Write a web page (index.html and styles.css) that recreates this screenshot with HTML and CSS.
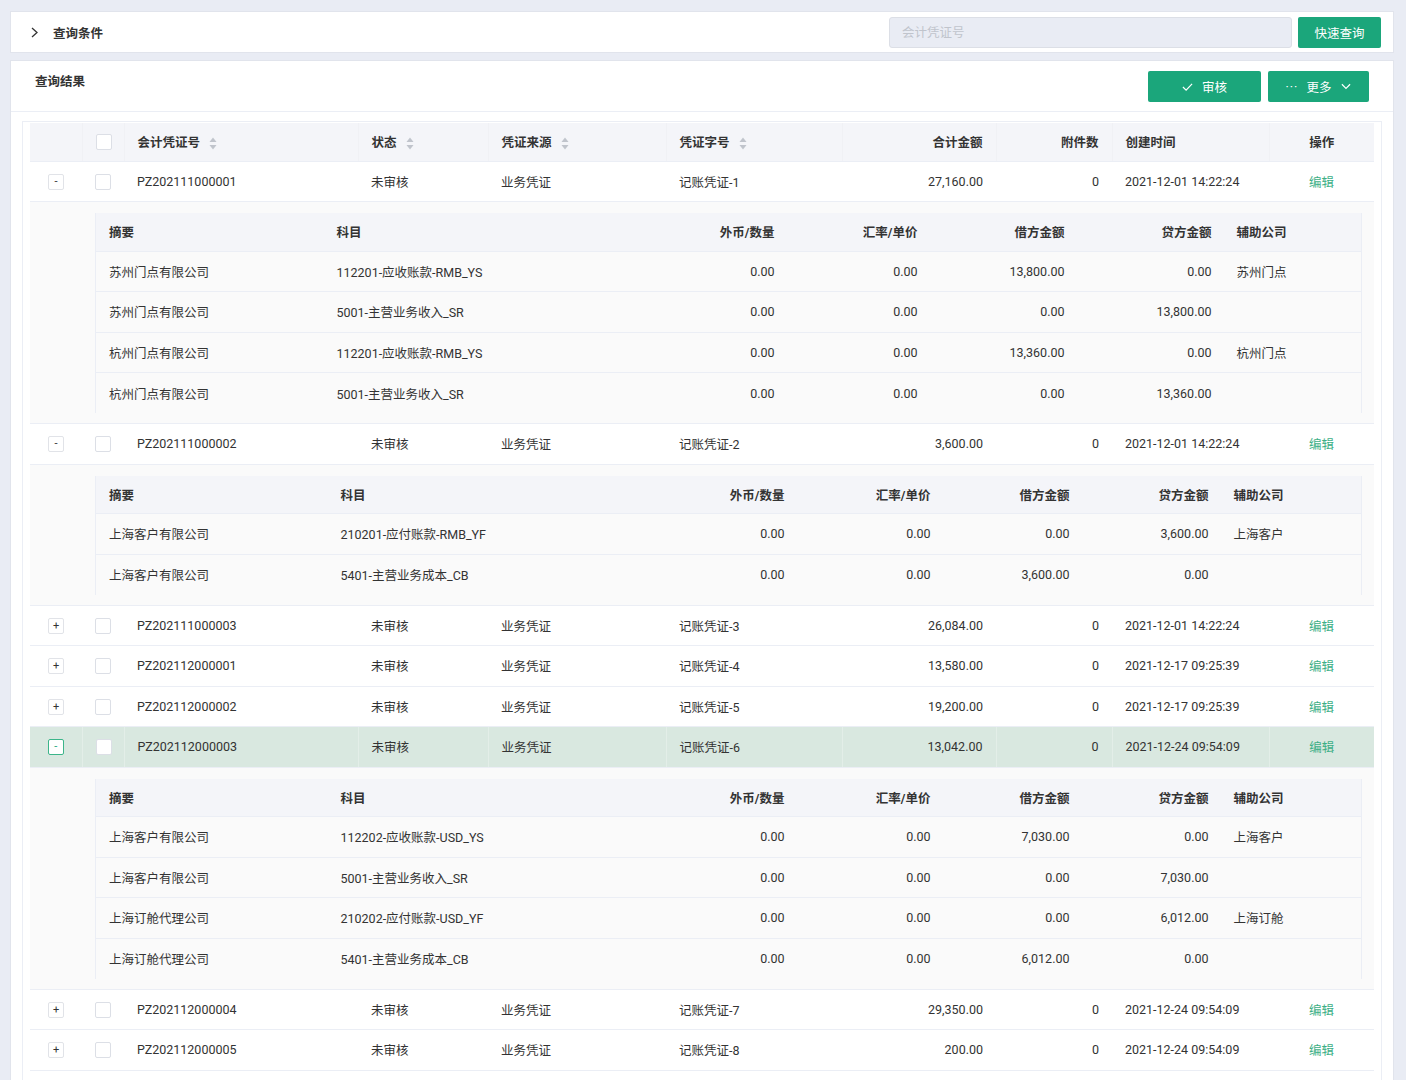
FILE: index.html
```html
<!DOCTYPE html>
<html lang="zh-CN">
<head>
    <meta charset="UTF-8">
    <title>凭证查询</title>
    <link rel="stylesheet" href="styles.css">
</head>
<body>
    <section class="query-bar">
        <div class="query-bar__toggle">
            <svg class="query-bar__arrow" viewBox="0 0 7 11"><path d="M1 1l5 4.5L1 10" /></svg>
            <span class="query-bar__title">查询条件</span>
        </div>
        <input class="query-bar__input" type="text" placeholder="会计凭证号">
        <button class="btn btn--search">快速查询</button>
    </section>

    <section class="result">
        <div class="result__header">
            <h2 class="result__title">查询结果</h2>
            <div class="result__actions">
                <button class="btn btn--action btn--audit">
                    <svg class="btn__icon" viewBox="0 0 12 10"><path d="M1 5l3.5 3.5L11 1.5" /></svg>
                    审核
                </button>
                <button class="btn btn--action btn--more">
                    <span class="btn__dots">···</span>
                    更多
                    <svg class="btn__icon btn__icon--down" viewBox="0 0 11 7"><path d="M1 1l4.5 4.5L10 1" /></svg>
                </button>
            </div>
        </div>

        <div class="grid-wrap">
            <table class="grid">
                <colgroup>
                    <col class="grid__col-expand">
                    <col class="grid__col-check">
                    <col class="grid__col-no">
                    <col class="grid__col-status">
                    <col class="grid__col-source">
                    <col class="grid__col-word">
                    <col class="grid__col-amount">
                    <col class="grid__col-attach">
                    <col class="grid__col-time">
                    <col class="grid__col-op">
                </colgroup>
                <thead>
                    <tr class="grid__head">
                        <th></th>
                        <th><span class="checkbox"></span></th>
                        <th>会计凭证号<svg class="sort" viewBox="0 0 8 13"><path d="M4 0.5L7.5 5H0.5z" /><path d="M4 12.5L0.5 8h7z" /></svg></th>
                        <th>状态<svg class="sort" viewBox="0 0 8 13"><path d="M4 0.5L7.5 5H0.5z" /><path d="M4 12.5L0.5 8h7z" /></svg></th>
                        <th>凭证来源<svg class="sort" viewBox="0 0 8 13"><path d="M4 0.5L7.5 5H0.5z" /><path d="M4 12.5L0.5 8h7z" /></svg></th>
                        <th>凭证字号<svg class="sort" viewBox="0 0 8 13"><path d="M4 0.5L7.5 5H0.5z" /><path d="M4 12.5L0.5 8h7z" /></svg></th>
                        <th class="is-right">合计金额</th>
                        <th class="is-right">附件数</th>
                        <th>创建时间</th>
                        <th class="is-center">操作</th>
                    </tr>
                </thead>
                <tbody>
                    <tr class="grid__row">
                        <td class="is-center"><span class="expander">-</span></td>
                        <td><span class="checkbox"></span></td>
                        <td>PZ202111000001</td>
                        <td>未审核</td>
                        <td>业务凭证</td>
                        <td>记账凭证-1</td>
                        <td class="is-right">27,160.00</td>
                        <td class="is-right">0</td>
                        <td>2021-12-01 14:22:24</td>
                        <td class="is-center"><a class="link" href="#">编辑</a></td>
                    </tr>
                    <tr class="grid__detail">
                        <td colspan="10">
                            <table class="detail">
                                <colgroup>
                                    <col class="detail__c1"><col class="detail__c2"><col class="detail__c3"><col class="detail__c4"><col class="detail__c5"><col class="detail__c6"><col class="detail__c7">
                                </colgroup>
                                <tr class="detail__head">
                                    <th>摘要</th><th>科目</th><th class="is-right">外币/数量</th><th class="is-right">汇率/单价</th><th class="is-right">借方金额</th><th class="is-right">贷方金额</th><th>辅助公司</th>
                                </tr>
                                <tr><td>苏州门点有限公司</td><td>112201-应收账款-RMB_YS</td><td class="is-right">0.00</td><td class="is-right">0.00</td><td class="is-right">13,800.00</td><td class="is-right">0.00</td><td>苏州门点</td></tr>
                                <tr><td>苏州门点有限公司</td><td>5001-主营业务收入_SR</td><td class="is-right">0.00</td><td class="is-right">0.00</td><td class="is-right">0.00</td><td class="is-right">13,800.00</td><td></td></tr>
                                <tr><td>杭州门点有限公司</td><td>112201-应收账款-RMB_YS</td><td class="is-right">0.00</td><td class="is-right">0.00</td><td class="is-right">13,360.00</td><td class="is-right">0.00</td><td>杭州门点</td></tr>
                                <tr><td>杭州门点有限公司</td><td>5001-主营业务收入_SR</td><td class="is-right">0.00</td><td class="is-right">0.00</td><td class="is-right">0.00</td><td class="is-right">13,360.00</td><td></td></tr>
                            </table>
                        </td>
                    </tr>
                    <tr class="grid__row">
                        <td class="is-center"><span class="expander">-</span></td>
                        <td><span class="checkbox"></span></td>
                        <td>PZ202111000002</td>
                        <td>未审核</td>
                        <td>业务凭证</td>
                        <td>记账凭证-2</td>
                        <td class="is-right">3,600.00</td>
                        <td class="is-right">0</td>
                        <td>2021-12-01 14:22:24</td>
                        <td class="is-center"><a class="link" href="#">编辑</a></td>
                    </tr>
                    <tr class="grid__detail">
                        <td colspan="10">
                            <table class="detail detail--alt">
                                <colgroup>
                                    <col class="detail__c1"><col class="detail__c2"><col class="detail__c3"><col class="detail__c4"><col class="detail__c5"><col class="detail__c6"><col class="detail__c7">
                                </colgroup>
                                <tr class="detail__head">
                                    <th>摘要</th><th>科目</th><th class="is-right">外币/数量</th><th class="is-right">汇率/单价</th><th class="is-right">借方金额</th><th class="is-right">贷方金额</th><th>辅助公司</th>
                                </tr>
                                <tr><td>上海客户有限公司</td><td>210201-应付账款-RMB_YF</td><td class="is-right">0.00</td><td class="is-right">0.00</td><td class="is-right">0.00</td><td class="is-right">3,600.00</td><td>上海客户</td></tr>
                                <tr><td>上海客户有限公司</td><td>5401-主营业务成本_CB</td><td class="is-right">0.00</td><td class="is-right">0.00</td><td class="is-right">3,600.00</td><td class="is-right">0.00</td><td></td></tr>
                            </table>
                        </td>
                    </tr>
                    <tr class="grid__row">
                        <td class="is-center"><span class="expander">+</span></td>
                        <td><span class="checkbox"></span></td>
                        <td>PZ202111000003</td>
                        <td>未审核</td>
                        <td>业务凭证</td>
                        <td>记账凭证-3</td>
                        <td class="is-right">26,084.00</td>
                        <td class="is-right">0</td>
                        <td>2021-12-01 14:22:24</td>
                        <td class="is-center"><a class="link" href="#">编辑</a></td>
                    </tr>
                    <tr class="grid__row">
                        <td class="is-center"><span class="expander">+</span></td>
                        <td><span class="checkbox"></span></td>
                        <td>PZ202112000001</td>
                        <td>未审核</td>
                        <td>业务凭证</td>
                        <td>记账凭证-4</td>
                        <td class="is-right">13,580.00</td>
                        <td class="is-right">0</td>
                        <td>2021-12-17 09:25:39</td>
                        <td class="is-center"><a class="link" href="#">编辑</a></td>
                    </tr>
                    <tr class="grid__row">
                        <td class="is-center"><span class="expander">+</span></td>
                        <td><span class="checkbox"></span></td>
                        <td>PZ202112000002</td>
                        <td>未审核</td>
                        <td>业务凭证</td>
                        <td>记账凭证-5</td>
                        <td class="is-right">19,200.00</td>
                        <td class="is-right">0</td>
                        <td>2021-12-17 09:25:39</td>
                        <td class="is-center"><a class="link" href="#">编辑</a></td>
                    </tr>
                    <tr class="grid__row grid__row--active">
                        <td class="is-center"><span class="expander expander--active">-</span></td>
                        <td><span class="checkbox"></span></td>
                        <td>PZ202112000003</td>
                        <td>未审核</td>
                        <td>业务凭证</td>
                        <td>记账凭证-6</td>
                        <td class="is-right">13,042.00</td>
                        <td class="is-right">0</td>
                        <td>2021-12-24 09:54:09</td>
                        <td class="is-center"><a class="link" href="#">编辑</a></td>
                    </tr>
                    <tr class="grid__detail">
                        <td colspan="10">
                            <table class="detail detail--alt">
                                <colgroup>
                                    <col class="detail__c1"><col class="detail__c2"><col class="detail__c3"><col class="detail__c4"><col class="detail__c5"><col class="detail__c6"><col class="detail__c7">
                                </colgroup>
                                <tr class="detail__head">
                                    <th>摘要</th><th>科目</th><th class="is-right">外币/数量</th><th class="is-right">汇率/单价</th><th class="is-right">借方金额</th><th class="is-right">贷方金额</th><th>辅助公司</th>
                                </tr>
                                <tr><td>上海客户有限公司</td><td>112202-应收账款-USD_YS</td><td class="is-right">0.00</td><td class="is-right">0.00</td><td class="is-right">7,030.00</td><td class="is-right">0.00</td><td>上海客户</td></tr>
                                <tr><td>上海客户有限公司</td><td>5001-主营业务收入_SR</td><td class="is-right">0.00</td><td class="is-right">0.00</td><td class="is-right">0.00</td><td class="is-right">7,030.00</td><td></td></tr>
                                <tr><td>上海订舱代理公司</td><td>210202-应付账款-USD_YF</td><td class="is-right">0.00</td><td class="is-right">0.00</td><td class="is-right">0.00</td><td class="is-right">6,012.00</td><td>上海订舱</td></tr>
                                <tr><td>上海订舱代理公司</td><td>5401-主营业务成本_CB</td><td class="is-right">0.00</td><td class="is-right">0.00</td><td class="is-right">6,012.00</td><td class="is-right">0.00</td><td></td></tr>
                            </table>
                        </td>
                    </tr>
                    <tr class="grid__row">
                        <td class="is-center"><span class="expander">+</span></td>
                        <td><span class="checkbox"></span></td>
                        <td>PZ202112000004</td>
                        <td>未审核</td>
                        <td>业务凭证</td>
                        <td>记账凭证-7</td>
                        <td class="is-right">29,350.00</td>
                        <td class="is-right">0</td>
                        <td>2021-12-24 09:54:09</td>
                        <td class="is-center"><a class="link" href="#">编辑</a></td>
                    </tr>
                    <tr class="grid__row">
                        <td class="is-center"><span class="expander">+</span></td>
                        <td><span class="checkbox"></span></td>
                        <td>PZ202112000005</td>
                        <td>未审核</td>
                        <td>业务凭证</td>
                        <td>记账凭证-8</td>
                        <td class="is-right">200.00</td>
                        <td class="is-right">0</td>
                        <td>2021-12-24 09:54:09</td>
                        <td class="is-center"><a class="link" href="#">编辑</a></td>
                    </tr>
                </tbody>
            </table>
        </div>
    </section>
</body>
</html>
```

FILE: styles.css
```css
body {
    margin: 0;
    padding: 11px 12px 0 10px;
    height: 1080px;
    overflow: hidden;
    box-sizing: border-box;

    background: #E9ECF4;

    font-family: Roboto, "Noto Sans CJK SC", sans-serif;
    font-size: 12.5px;
    color: #333333;
}

/* top query bar */

.query-bar {
    height: 42px;
    box-sizing: border-box;
    padding: 0 12px 0 20px;

    display: flex;
    align-items: center;
    gap: 6px;

    background: #FFFFFF;
    border: 1px solid #E1E4EC;
}

.query-bar__toggle {
    flex: 1 0 0;

    display: flex;
    align-items: center;
}

.query-bar__arrow {
    width: 7px;
    height: 11px;
    margin-right: 15px;

    fill: none;
    stroke: #333333;
    stroke-width: 1.3;
}

.query-bar__title {
    font-weight: 700;
}

.query-bar__input {
    width: 403px;
    height: 31px;
    box-sizing: border-box;
    padding: 0 12px;

    background: #E9ECF4;
    border: 1px solid #DCDFE6;
    border-radius: 3px;
    outline: none;

    font-family: inherit;
    font-size: 12.5px;
    color: #333333;
}

.query-bar__input::placeholder {
    color: #C0C4CC;
}

.btn {
    border: 0;
    border-radius: 2px;
    padding: 0;

    background: #1BA67B;
    color: #FFFFFF;

    font-family: inherit;
    font-size: 12.5px;

    cursor: pointer;
}

.btn--search {
    width: 83px;
    height: 31px;
}

/* result panel */

.result {
    margin-top: 7px;
    height: 1100px;

    background: #FFFFFF;
    border: 1px solid #E1E4EC;
}

.result__header {
    height: 51px;
    box-sizing: border-box;
    padding: 10px 24px 0 24px;

    display: flex;
    align-items: flex-start;
    justify-content: space-between;

    border-bottom: 1px solid #EBEEF5;
}

.result__title {
    margin: 0;
    padding-top: 1px;

    font-size: 12.5px;
    line-height: 20px;
    font-weight: 700;
}

.result__actions {
    display: flex;
    gap: 7px;
}

.btn--action {
    height: 31px;

    display: flex;
    align-items: center;
    justify-content: center;
}

.btn--audit {
    width: 113px;
}

.btn--more {
    width: 101px;
}

.btn__icon {
    width: 11px;
    height: 10px;
    margin-right: 9px;

    fill: none;
    stroke: #FFFFFF;
    stroke-width: 1.3;
}

.btn__icon--down {
    width: 10px;
    height: 7px;
    margin: 0 0 0 10px;
}

.btn__dots {
    margin-right: 8px;
    letter-spacing: 1px;
}

/* main grid */

.grid-wrap {
    min-height: 1000px;
    margin: 9px 11px 0;
    padding: 1px 7px 0;

    border: 1px solid #EBEEF5;
}

.grid {
    width: 100%;
    table-layout: fixed;
    border-collapse: collapse;
    border-spacing: 0;
}

.grid__col-expand { width: 52px; }
.grid__col-check { width: 42px; }
.grid__col-no { width: 234px; }
.grid__col-status { width: 130px; }
.grid__col-source { width: 178px; }
.grid__col-word { width: 176px; }
.grid__col-amount { width: 154px; }
.grid__col-attach { width: 116px; }
.grid__col-time { width: 157px; }
.grid__col-op { width: 105px; }

.grid th,
.grid td {
    padding: 0 13px;
    box-sizing: border-box;
    text-align: left;
    white-space: nowrap;
}

.grid__head th {
    height: 38px;

    background: #F4F5F9;
    border-bottom: 1px solid #EBEEF5;
    border-right: 1px solid #F0F1F5;

    font-weight: 700;
}

.grid__head th:last-child {
    border-right: 0;
}

.grid__row td {
    height: 40.5px;

    background: #FFFFFF;
    border-bottom: 1px solid #EBEEF5;
}

.grid__row--active td {
    background: #D9E8E0;
    border-left: 1px solid #E3EEE8;
}

.grid__row--active td:first-child {
    border-left: 0;
}

.grid .is-right {
    text-align: right;
}

.grid .is-center {
    text-align: center;
}

.sort {
    width: 8px;
    height: 13px;
    margin-left: 9px;
    vertical-align: -3px;

    fill: #C0C4CC;
}

.checkbox {
    display: inline-block;
    width: 16px;
    height: 16px;
    box-sizing: border-box;
    vertical-align: middle;

    background: #FFFFFF;
    border: 1px solid #DCDFE6;
    border-radius: 2px;
}

.expander {
    display: inline-block;
    width: 16px;
    height: 16px;
    box-sizing: border-box;
    vertical-align: middle;

    background: #FFFFFF;
    border: 1px solid #E1E3E8;
    border-radius: 2px;

    font-size: 11px;
    line-height: 14px;
    text-align: center;
    color: #333333;
}

.expander--active {
    border-color: #3CB58A;
    color: #1BA67B;
}

.link {
    color: #3DAF86;
    text-decoration: none;
}

/* expanded detail */

.grid__detail > td {
    padding: 11px 13px 10px 65px;

    background: #FAFAFA;
    border-bottom: 1px solid #EBEEF5;
}

.detail {
    width: 100%;
    table-layout: fixed;
    border-collapse: collapse;

    border-left: 1px solid #EBEEF5;
    border-right: 1px solid #EBEEF5;
}

.detail__c1 { width: 228px; }
.detail__c2 { width: 264px; }
.detail__c3 { width: 200px; }
.detail__c4 { width: 143px; }
.detail__c5 { width: 147px; }
.detail__c6 { width: 147px; }
.detail__c7 { width: 137px; }

.detail--alt .detail__c1 { width: 232px; }
.detail--alt .detail__c2 { width: 270px; }
.detail--alt .detail__c3 { width: 200px; }
.detail--alt .detail__c4 { width: 146px; }
.detail--alt .detail__c5 { width: 139px; }
.detail--alt .detail__c6 { width: 139px; }
.detail--alt .detail__c7 { width: 140px; }

.detail th,
.detail td {
    padding: 0 13px;
    text-align: left;
    white-space: nowrap;
}

.detail th:last-child,
.detail td:last-child {
    padding-left: 12px;
}

.detail__head th {
    height: 38px;

    background: #F4F5F9;
    border-bottom: 1px solid #EBEEF5;

    font-weight: 700;
}

.detail td {
    height: 40.5px;

    background: #FAFAFA;
    border-bottom: 1px solid #EBEEF5;
}

.detail tr:last-child td {
    border-bottom: 0;
}

.detail .is-right {
    text-align: right;
}
```
